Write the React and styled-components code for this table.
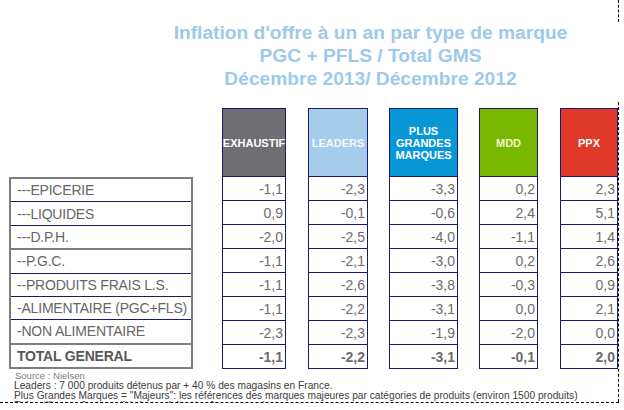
import React from 'react'
import styled, { createGlobalStyle } from 'styled-components'

const GlobalStyle = createGlobalStyle`
body{
    margin: 0;
    background: #fff;
    font-family: "Liberation Sans", Arial, sans-serif;
}
`

const NAVY = '#1b1a6c'

const brands = [
    { key: 'exh', label: 'EXHAUSTIF', bg: '#6e6e73', fg: '#ffffff', gap: 29, width: 64 },
    { key: 'lead', label: 'LEADERS', bg: '#a5cceb', fg: '#f4f8fc', gap: 22, width: 60 },
    { key: 'pgm', label: 'PLUS GRANDES MARQUES', bg: '#0897d6', fg: '#ffffff', gap: 21, width: 69 },
    { key: 'mdd', label: 'MDD', bg: '#78b800', fg: '#f3f5c8', gap: 21, width: 59 },
    { key: 'ppx', label: 'PPX', bg: '#e0392a', fg: '#ffffff', gap: 22, width: 58 },
]

const rows = [
    { label: '---EPICERIE', values: ['-1,1', '-2,3', '-3,3', '0,2', '2,3'] },
    { label: '---LIQUIDES', values: ['0,9', '-0,1', '-0,6', '2,4', '5,1'] },
    { label: '---D.P.H.', values: ['-2,0', '-2,5', '-4,0', '-1,1', '1,4'], split: true },
    { label: '--P.G.C.', values: ['-1,1', '-2,1', '-3,0', '0,2', '2,6'] },
    { label: '--PRODUITS FRAIS L.S.', values: ['-1,1', '-2,6', '-3,8', '-0,3', '0,9'] },
    { label: '-ALIMENTAIRE (PGC+FLS)', values: ['-1,1', '-2,2', '-3,1', '0,0', '2,1'] },
    { label: '-NON ALIMENTAIRE', values: ['-2,3', '-2,3', '-1,9', '-2,0', '0,0'], split: true },
    { label: 'TOTAL GENERAL', values: ['-1,1', '-2,2', '-3,1', '-0,1', '2,0'], total: true },
]

const App = () => {
    return (
        <>
            <GlobalStyle />
            <Frame>
                <TopStrip />
                <Title>
                    <div>Inflation d'offre à un an par type de marque</div>
                    <div>PGC + PFLS / Total GMS</div>
                    <div>Décembre 2013/ Décembre 2012</div>
                </Title>
                <Body>
                    <Table>
                        <LabelColumn>
                            <LabelBox>
                                {rows.map(r => (
                                    <LabelRow key={r.label} $split={r.split} $total={r.total}>
                                        {r.label}
                                    </LabelRow>
                                ))}
                            </LabelBox>
                        </LabelColumn>
                        {brands.map((b, i) => (
                            <BrandColumn key={b.key} $gap={b.gap} $width={b.width}>
                                <BrandHeader $bg={b.bg} $fg={b.fg}>{b.label}</BrandHeader>
                                {rows.map(r => (
                                    <ValueCell key={r.label} $total={r.total}>
                                        {r.values[i]}
                                    </ValueCell>
                                ))}
                            </BrandColumn>
                        ))}
                    </Table>
                    <Footer>
                        <Source>Source : Nielsen</Source>
                        <Note>Leaders : 7 000 produits détenus par + 40 % des magasins en France.</Note>
                        <Note>Plus Grandes Marques = "Majeurs": les références des marques majeures par catégories de produits (environ 1500 produits)</Note>
                        <Note>Echantillon : même qualité de produits et même magasins</Note>
                    </Footer>
                </Body>
            </Frame>
        </>
    )
}

export default App

const Frame = styled.div`
width: 619px;
height: 403px;
box-sizing: border-box;
border-bottom: 1px dashed #000;
`

const TopStrip = styled.div`
height: 22px;
border-right: 1px dashed #000;
`

const Title = styled.div`
height: 81px;
text-align: center;
color: #9dc9ea;
font-weight: bold;
font-size: 19.2px;
line-height: 23px;
padding-left: 122px;
margin-top: -1px;
`

const Body = styled.div`
border-right: 1px dashed #000;
padding-top: 6px;
height: 294px;
`

const Table = styled.div`
display: flex;
padding-left: 9px;
`

const LabelColumn = styled.div`
width: 184px;
padding-top: 69px;
`

const LabelBox = styled.div`
box-sizing: border-box;
height: 192px;
border: 2px solid #7d7d7d;
display: flex;
flex-direction: column;
`

const LabelRow = styled.div`
flex: 1;
display: flex;
align-items: center;
padding-left: 6px;
font-size: 14px;
letter-spacing: -0.2px;
white-space: nowrap;
color: ${p => p.$total ? '#575757' : '#666'};
font-weight: ${p => p.$total ? 'bold' : 'normal'};
border-bottom: ${p => p.$total ? 'none' : p.$split ? '2px solid #7d7d7d' : `1px solid ${NAVY}`};
`

const BrandColumn = styled.div`
margin-left: ${p => p.$gap}px;
width: ${p => p.$width}px;
display: flex;
flex-direction: column;
`

const BrandHeader = styled.div`
box-sizing: border-box;
height: 69px;
border: 1px solid ${NAVY};
background: ${p => p.$bg};
color: ${p => p.$fg};
display: flex;
align-items: center;
justify-content: center;
text-align: center;
font-weight: bold;
font-size: 11px;
line-height: 12px;
`

const ValueCell = styled.div`
box-sizing: border-box;
height: 24px;
border: 1px solid ${NAVY};
border-top: none;
display: flex;
align-items: center;
justify-content: flex-end;
padding-right: 2px;
font-size: 14px;
color: #6c6c6c;
font-weight: ${p => p.$total ? 'bold' : 'normal'};
`

const Footer = styled.div`
padding-left: 14px;
padding-top: 2px;
font-size: 10.2px;
line-height: 10px;
white-space: nowrap;
`

const Source = styled.div`
color: #7a7a7a;
font-size: 9.5px;
padding-left: 1px;
`

const Note = styled.div`
color: #3c3c3c;
`
